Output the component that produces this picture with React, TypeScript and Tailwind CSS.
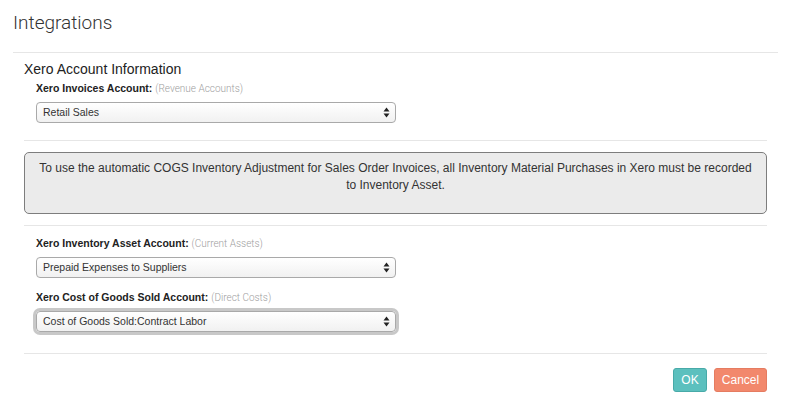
import React from 'react';

const SelectArrows = () => (
  <svg width="7" height="11" viewBox="0 0 7 11" className="shrink-0">
    <polygon points="3.5,0.5 6.5,4.5 0.5,4.5" fill="#222" />
    <polygon points="0.5,6.5 6.5,6.5 3.5,10.5" fill="#222" />
  </svg>
);

const FakeSelect = ({ value, focused }: { value: string; focused?: boolean }) => (
  <div
    className={`w-[360px] h-[21px] flex items-center justify-between pl-[6px] pr-[5px] rounded-[4px] border border-[#a9a9a9] bg-gradient-to-b from-white to-[#f1f1f1] text-[10.5px] text-[#333] ${
      focused ? 'ring-[3px] ring-[#b0b0b0]/70' : ''
    }`}
  >
    <span>{value}</span>
    <SelectArrows />
  </div>
);

const Field = ({ label, hint, value, focused }: { label: string; hint: string; value: string; focused?: boolean }) => (
  <div className="pl-[12px]">
    <div className="text-[10.5px] leading-[13px] text-[#222] mb-[7px]">
      <span className="font-bold">{label}</span>{' '}
      <span className="text-[10px] text-[#a0a0a0]" style={{ fontFamily: 'Roboto, "Liberation Sans", sans-serif', fontWeight: 300 }}>
        {hint}
      </span>
    </div>
    <FakeSelect value={value} focused={focused} />
  </div>
);

export default function App() {
  return (
    <div className="w-[802px] h-[409px] bg-white" style={{ fontFamily: '"Liberation Sans", Arial, sans-serif' }}>
      <div className="ml-[13px] mr-[24px]">
        <div className="h-[53px] border-b border-[#e6e6e6] pt-[11px]">
          <h1 className="text-[19px] leading-[24px] font-light text-[#333]" style={{ fontFamily: 'Roboto, "Liberation Sans", sans-serif' }}>
            Integrations
          </h1>
        </div>

        <div className="px-[11px]">
          <h2 className="mt-[8px] text-[14px] leading-[17px] text-[#222]">Xero Account Information</h2>

          <div className="mt-[4px]">
            <Field label="Xero Invoices Account:" hint="(Revenue Accounts)" value="Retail Sales" />
          </div>

          <div className="mt-[17px] border-t border-[#e6e6e6]" />

          <div className="mt-[11px] h-[62px] rounded-[5px] border border-[#7d7d7d] bg-[#ebebeb] pt-[7px] px-[10px] text-center text-[12px] leading-[17px] text-[#333]">
            To use the automatic COGS Inventory Adjustment for Sales Order Invoices, all Inventory Material Purchases in Xero must be recorded to Inventory Asset.
          </div>

          <div className="mt-[11px] border-t border-[#e6e6e6]" />

          <div className="mt-[11px] flex flex-col gap-[13px]">
            <Field label="Xero Inventory Asset Account:" hint="(Current Assets)" value="Prepaid Expenses to Suppliers" />
            <Field label="Xero Cost of Goods Sold Account:" hint="(Direct Costs)" value="Cost of Goods Sold:Contract Labor" focused />
          </div>

          <div className="mt-[21px] border-t border-[#e6e6e6]" />

          <div className="mt-[14px] flex justify-end gap-[7px]">
            <button className="h-[24px] w-[34px] rounded-[3px] border border-[#48aaa8] bg-[#5cc0be] text-[12px] text-white">
              OK
            </button>
            <button className="h-[24px] w-[53px] rounded-[3px] border border-[#e57c61] bg-[#f2886c] text-[12px] text-white">
              Cancel
            </button>
          </div>
        </div>
      </div>
    </div>
  );
}
